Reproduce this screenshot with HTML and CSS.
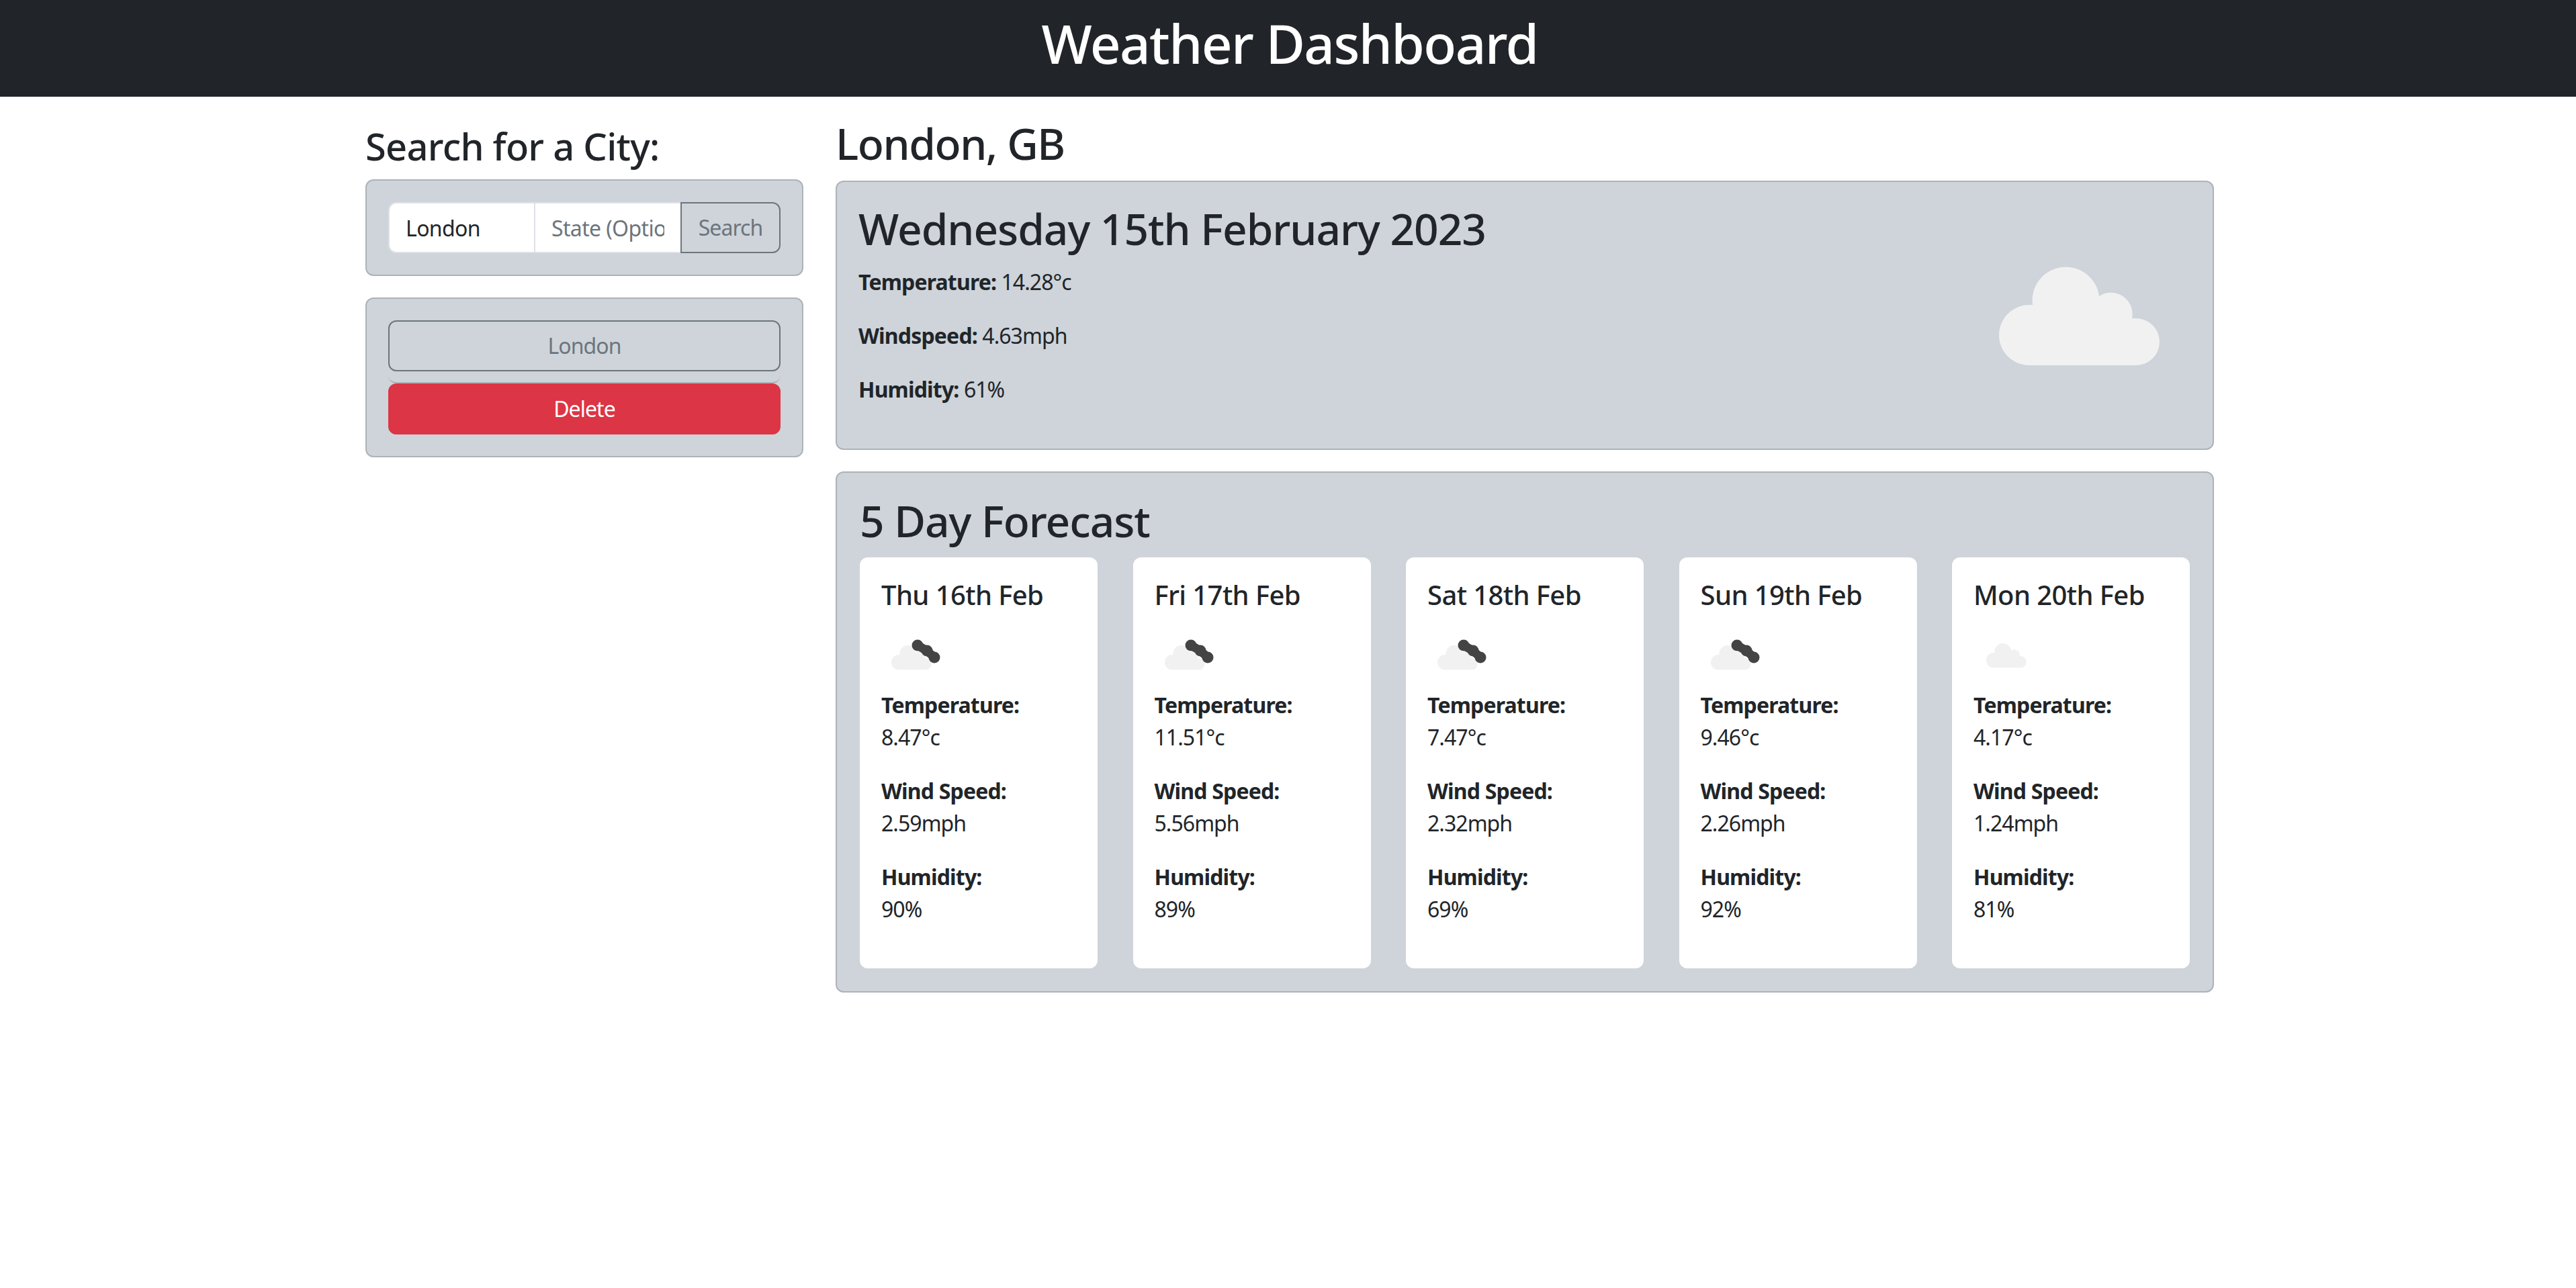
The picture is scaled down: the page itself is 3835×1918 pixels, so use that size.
FILE: index.html
```html
<!DOCTYPE html>
<html lang="en">
<head>
<meta charset="utf-8">
<title>Weather Dashboard</title>
<link rel="stylesheet" href="styles.css">
</head>
<body>
<svg class="defs" aria-hidden="true"><defs>
<symbol id="cloud" viewBox="0 0 240 150"><path fill="#f1f1f1" d="M45 150A45 45 0 0 1 45 60L50 60A49.5 49.5 0 1 1 149 47A32 32 0 0 1 198 80L204 80A35 35 0 0 1 204 150Z"/></symbol>
<symbol id="broken" viewBox="0 0 100 100">
<svg x="15" y="34" width="60" height="37.5" viewBox="0 0 240 150"><path fill="#f1f1f1" d="M45 150A45 45 0 0 1 45 60L50 60A49.5 49.5 0 1 1 149 47A32 32 0 0 1 198 80L204 80A35 35 0 0 1 204 150Z"/></svg>
<path stroke="#444" stroke-width="13" fill="none" d="M54 35L68 43 79 53"/>
<circle fill="#444" cx="54" cy="35" r="8.5"/><circle fill="#444" cx="68" cy="43" r="8.5"/><circle fill="#444" cx="79" cy="53" r="8.5"/>
</symbol>
<symbol id="overcast" viewBox="0 0 100 100"><svg x="19" y="31" width="60" height="37.5" viewBox="0 0 240 150"><path fill="#f1f1f1" d="M45 150A45 45 0 0 1 45 60L50 60A49.5 49.5 0 1 1 149 47A32 32 0 0 1 198 80L204 80A35 35 0 0 1 204 150Z"/></svg></symbol>
</defs></svg>
<header class="topbar"><h1 class="title">Weather Dashboard</h1></header>
<main class="layout">
  <aside class="sidebar">
    <h3 class="heading heading-side">Search for a City:</h3>
    <form class="panel search">
      <input class="field field-first" type="text" value="London">
      <input class="field field-second" type="text" placeholder="State (Optional)">
      <button class="btn-search" type="button">Search</button>
    </form>
    <div class="panel saved">
      <div class="saved-row"><button class="btn-city" type="button">London</button></div>
      <button class="btn-delete" type="button">Delete</button>
    </div>
  </aside>
  <section class="content">
    <h2 class="heading heading-main">London, GB</h2>
    <div class="panel today">
      <div class="today-text">
        <h2 class="big">Wednesday 15th February 2023</h2>
        <p class="stat"><strong>Temperature:</strong> 14.28°c</p>
        <p class="stat"><strong>Windspeed:</strong> 4.63mph</p>
        <p class="stat"><strong>Humidity:</strong> 61%</p>
      </div>
      <svg class="today-icon"><use href="#cloud"/></svg>
    </div>
    <div class="panel forecast">
      <h2 class="big">5 Day Forecast</h2>
      <div class="days">
        <article class="day">
          <h5 class="day-title">Thu 16th Feb</h5>
          <svg class="day-icon"><use href="#broken"/></svg>
          <p class="stat"><strong>Temperature:</strong><br>8.47°c</p>
          <p class="stat"><strong>Wind Speed:</strong><br>2.59mph</p>
          <p class="stat"><strong>Humidity:</strong><br>90%</p>
        </article>
        <article class="day">
          <h5 class="day-title">Fri 17th Feb</h5>
          <svg class="day-icon"><use href="#broken"/></svg>
          <p class="stat"><strong>Temperature:</strong><br>11.51°c</p>
          <p class="stat"><strong>Wind Speed:</strong><br>5.56mph</p>
          <p class="stat"><strong>Humidity:</strong><br>89%</p>
        </article>
        <article class="day">
          <h5 class="day-title">Sat 18th Feb</h5>
          <svg class="day-icon"><use href="#broken"/></svg>
          <p class="stat"><strong>Temperature:</strong><br>7.47°c</p>
          <p class="stat"><strong>Wind Speed:</strong><br>2.32mph</p>
          <p class="stat"><strong>Humidity:</strong><br>69%</p>
        </article>
        <article class="day">
          <h5 class="day-title">Sun 19th Feb</h5>
          <svg class="day-icon"><use href="#broken"/></svg>
          <p class="stat"><strong>Temperature:</strong><br>9.46°c</p>
          <p class="stat"><strong>Wind Speed:</strong><br>2.26mph</p>
          <p class="stat"><strong>Humidity:</strong><br>92%</p>
        </article>
        <article class="day">
          <h5 class="day-title">Mon 20th Feb</h5>
          <svg class="day-icon"><use href="#overcast"/></svg>
          <p class="stat"><strong>Temperature:</strong><br>4.17°c</p>
          <p class="stat"><strong>Wind Speed:</strong><br>1.24mph</p>
          <p class="stat"><strong>Humidity:</strong><br>81%</p>
        </article>
      </div>
    </div>
  </section>
</main>
</body>
</html>
```
FILE: styles.css
```css
* { box-sizing: border-box; }
html, body { margin: 0; background: #fff; overflow: hidden; }
body { font-family: "Noto Sans", sans-serif; font-size: 32px; line-height: 1.5; color: #212529; letter-spacing: -0.03em; }
.defs { position: absolute; width: 0; height: 0; }
h1, h2, h3, h5, p { margin: 0; font-weight: 500; }

.topbar { background: #212529; color: #fff; height: 144px; padding: 16px 0 0 5px; text-align: center; }
.title { font-size: 80px; line-height: 1.2; letter-spacing: -0.02em; }

.layout { display: flex; gap: 48px; margin-left: 544px; width: 2752px; }
.sidebar { width: 652px; flex: none; padding-top: 40px; }
.content { width: 2052px; flex: none; padding-top: 32px; }
.heading { line-height: 1.2; margin-bottom: 16px; }
.heading-side { font-size: 56px; letter-spacing: -0.013em; }
.heading-main { font-size: 64px; letter-spacing: -0.022em; }

.panel { background: #ced4da; border: 2px solid #adb3b8; border-radius: 12px; padding: 32px; margin-bottom: 32px; }

.search { display: flex; }
.field { font: inherit; letter-spacing: -0.02em; color: #212529; height: 76px; padding: 12px 24px; border: 2px solid #dee2e6; background: #fff; min-width: 0; outline: none; }
.field::placeholder { color: #6c757d; opacity: 1; }
.field-first { width: 219px; border-radius: 12px 0 0 12px; }
.field-second { width: 216px; border-left-width: 0; border-right-width: 0; }
.btn-search { font: inherit; letter-spacing: inherit; flex: 1; height: 76px; padding: 0; color: #6c757d; background: transparent; border: 2px solid #6c757d; border-radius: 0 12px 12px 0; }

.saved-row { height: 94px; padding-bottom: 16px; border-bottom: 2px solid #adb3b8; border-radius: 12px; }
.btn-city, .btn-delete { font: inherit; letter-spacing: inherit; display: block; width: 100%; height: 76px; border-radius: 12px; padding: 0; }
.btn-city { color: #6c757d; background: transparent; border: 2px solid #6c757d; }
.btn-delete { color: #fff; background: #dc3545; border: 2px solid #dc3545; }

.today { display: flex; justify-content: space-between; align-items: flex-start; }
.big { font-size: 64px; line-height: 1.2; margin-bottom: 16px; letter-spacing: -0.016em; }
.stat { font-weight: 400; margin-bottom: 32px; }
.stat strong { font-weight: 700; letter-spacing: -0.026em; }
.today-icon { width: 240px; height: 150px; margin: 91px 46px 0 0; flex: none; }

.days { display: flex; justify-content: space-between; }
.day { width: 354px; background: #fff; border-radius: 12px; padding: 32px; }
.day-title { font-size: 40px; line-height: 1.2; margin-bottom: 16px; letter-spacing: -0.015em; }
.day-icon { display: block; width: 100px; height: 100px; overflow: visible; }
.forecast { margin-bottom: 0; padding: 34px; }
```
